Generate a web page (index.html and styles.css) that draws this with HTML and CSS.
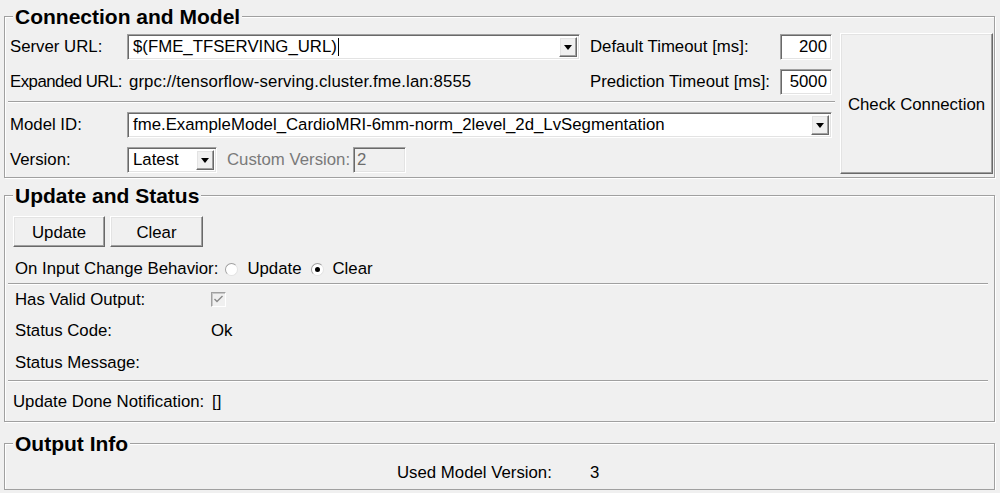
FILE: index.html
```html
<!DOCTYPE html>
<html>
<head>
<meta charset="utf-8">
<title>TF Serving</title>
<link rel="stylesheet" href="styles.css">
</head>
<body>
<fieldset class="group g1">
  <legend>Connection and Model</legend>
  <div class="g1-body">
    <div class="g1-left">
      <div class="conn-grid">
        <span class="lbl">Server URL:</span>
        <div class="combo"><span class="combo-text">$(FME_TFSERVING_URL)<span class="caret"></span></span><span class="arrow"></span></div>
        <span class="lbl lbl-r">Default Timeout [ms]:</span>
        <div class="field num">200</div>
        <span class="lbl tight">Expanded URL:</span>
        <span class="value">grpc://tensorflow-serving.cluster.fme.lan:8555</span>
        <span class="lbl lbl-r">Prediction Timeout [ms]:</span>
        <div class="field num">5000</div>
      </div>
      <div class="sep"></div>
      <div class="model-grid">
        <span class="lbl">Model ID:</span>
        <div class="combo"><span class="combo-text">fme.ExampleModel_CardioMRI-6mm-norm_2level_2d_LvSegmentation</span><span class="arrow"></span></div>
        <span class="lbl">Version:</span>
        <div class="version-row">
          <div class="combo small"><span class="combo-text">Latest</span><span class="arrow"></span></div>
          <span class="lbl disabled custom-lbl">Custom Version:</span>
          <div class="field disabled-field">2</div>
        </div>
      </div>
    </div>
    <button class="btn check">Check Connection</button>
  </div>
</fieldset>

<fieldset class="group g2">
  <legend>Update and Status</legend>
  <div class="btn-row">
    <button class="btn push">Update</button>
    <button class="btn push wide">Clear</button>
  </div>
  <div class="radio-row">
    <span>On Input Change Behavior:</span>
    <span class="radio first"></span><span>Update</span>
    <span class="radio checked"></span><span>Clear</span>
  </div>
  <div class="sep"></div>
  <div class="status-grid">
    <span class="srow">Has Valid Output:</span>
    <span class="srow"><span class="checkbox"><svg width="13" height="13" viewBox="0 0 13 13"><polyline points="2.5,6 5,8.5 10.5,3" fill="none" stroke="#8a8a8a" stroke-width="1.4"/></svg></span></span>
    <span class="srow">Status Code:</span>
    <span class="srow">Ok</span>
    <span class="srow">Status Message:</span>
    <span class="srow"></span>
  </div>
  <div class="sep sep2"></div>
  <div class="notify-grid">
    <span>Update Done Notification:</span>
    <span>[]</span>
  </div>
</fieldset>

<fieldset class="group g3">
  <legend>Output Info</legend>
  <div class="info-grid">
    <span>Used Model Version:</span>
    <span>3</span>
  </div>
</fieldset>
</body>
</html>
```

FILE: styles.css
```css
html, body {
  margin: 0;
  background: #f0f0f0;
}
body {
  padding: 5px 5px 0 4px;
  font-family: "Liberation Sans", Arial, sans-serif;
  font-size: 16.8px;
  color: #000;
}

.group {
  margin: 0;
  min-width: 0;
  border: 1px solid #a0a0a0;
  box-shadow: 1px 1px 0 #fff, inset 1px 1px 0 #fff;
}
.group legend {
  font-weight: bold;
  font-size: 21px;
  line-height: 23px;
  padding: 0 2px;
  margin-left: 5px;
  background: #f0f0f0;
}

.g1 { padding: 5px 1px 3px 3px; }
.g2 { margin-top: 6px; padding: 9px 6px 9px 3px; }
.g3 { margin-top: 10px; padding: 7px 6px 5px 3px; }

.g1-body { display: flex; align-items: stretch; }
.g1-left { width: 827px; }

.conn-grid {
  margin-top: 1px;
  display: grid;
  grid-template-columns: 119px 453px 200px 52px;
  grid-template-rows: 26px 26px;
  row-gap: 9px;
  align-items: center;
}
.lbl { padding-left: 2px; white-space: nowrap; }
.lbl.tight { letter-spacing: -0.5px; }
.lbl-r { padding-left: 10px; }
.value { padding-left: 2px; white-space: nowrap; letter-spacing: 0.1px; }

.combo {
  box-sizing: border-box;
  height: 26px;
  display: flex;
  align-items: stretch;
  background: #fff;
  border: 1px solid;
  border-color: #a0a0a0 #fff #fff #a0a0a0;
  box-shadow: inset 1px 1px 0 #696969, inset -1px -1px 0 #e3e3e3;
  padding: 2px;
}
.combo-text {
  flex: 1;
  display: flex;
  align-items: center;
  padding-left: 3px;
  white-space: nowrap;
  overflow: hidden;
}
.caret {
  display: inline-block;
  width: 1px;
  height: 18px;
  background: #000;
  margin-left: 1px;
}
.arrow {
  width: 18px;
  box-sizing: border-box;
  background: #f0f0f0;
  border: 1px solid;
  border-color: #fff #696969 #696969 #fff;
  box-shadow: inset -1px -1px 0 #a0a0a0, inset 1px 1px 0 #e3e3e3;
  display: flex;
  align-items: center;
  justify-content: center;
}
.arrow::after {
  content: "";
  display: block;
  width: 0;
  height: 0;
  margin-top: 1px;
  border-left: 4.5px solid transparent;
  border-right: 4.5px solid transparent;
  border-top: 5px solid #000;
}

.field {
  box-sizing: border-box;
  height: 26px;
  background: #fff;
  border: 1px solid;
  border-color: #a0a0a0 #fff #fff #a0a0a0;
  box-shadow: inset 1px 1px 0 #696969, inset -1px -1px 0 #e3e3e3;
  display: flex;
  align-items: center;
  padding: 0 4px;
}
.num { justify-content: flex-end; }
.disabled-field {
  width: 53px;
  background: #f0f0f0;
  color: #6d6d6d;
  padding-left: 3px;
}

.sep {
  height: 0;
  border-top: 1px solid #a0a0a0;
  border-bottom: 1px solid #fff;
  margin: 6px 0 9px;
}

.model-grid {
  display: grid;
  grid-template-columns: 119px 705px;
  grid-template-rows: 25px 26px;
  row-gap: 10px;
  align-items: center;
  margin-bottom: 1px;
}
.version-row { display: flex; align-items: center; height: 26px; }
.combo.small { width: 90px; }
.custom-lbl { width: 126px; margin-left: 10px; padding-left: 0; }
.disabled { color: #7a7a7a; }

.btn {
  font-family: inherit;
  font-size: inherit;
  color: #000;
  background: #f0f0f0;
  border: 1px solid;
  border-color: #fff #696969 #696969 #fff;
  box-shadow: inset -1px -1px 0 #a0a0a0, inset 1px 1px 0 #e3e3e3;
  margin: 0;
  padding: 0;
}
.check { width: 153px; margin-left: 5px; padding-top: 2px; }

.btn-row { display: flex; gap: 5px; margin-left: 5px; }
.push { width: 92px; height: 31px; padding-top: 2px; }
.push.wide { width: 93px; }

.radio-row {
  margin: 11px 0 0 7px;
  height: 22px;
  display: flex;
  align-items: center;
}
.radio {
  box-sizing: border-box;
  width: 13px;
  height: 13px;
  border-radius: 50%;
  background: #fff;
  border: 1px solid;
  border-color: #a0a0a0 #e3e3e3 #e3e3e3 #a0a0a0;
  margin: 0 9px 0 9px;
  position: relative;
}
.radio.first { margin-left: 7px; }
.radio.checked::after {
  content: "";
  position: absolute;
  left: 3px;
  top: 3px;
  width: 5px;
  height: 5px;
  border-radius: 50%;
  background: #000;
}
.g2 > .sep { margin: 3px 0 0; }

.status-grid {
  display: grid;
  grid-template-columns: 196px 1fr;
  grid-template-rows: 29px 33px 32px;
  margin-left: 7px;
}
.srow { display: flex; align-items: center; }
.checkbox {
  box-sizing: border-box;
  width: 15px;
  height: 15px;
  background: #f0f0f0;
  border: 1px solid;
  border-color: #a0a0a0 #fff #fff #a0a0a0;
  box-shadow: inset 1px 1px 0 #c8c8c8;
  display: flex;
  align-items: center;
  justify-content: center;
}
.g2 > .sep.sep2 { margin-top: 1px; }

.notify-grid {
  display: grid;
  grid-template-columns: 199px 1fr;
  height: 20px;
  align-items: center;
  margin: 10px 0 0 5px;
}

.info-grid {
  display: grid;
  grid-template-columns: 193px auto;
  height: 22px;
  align-items: center;
  margin-left: 389px;
}
```
